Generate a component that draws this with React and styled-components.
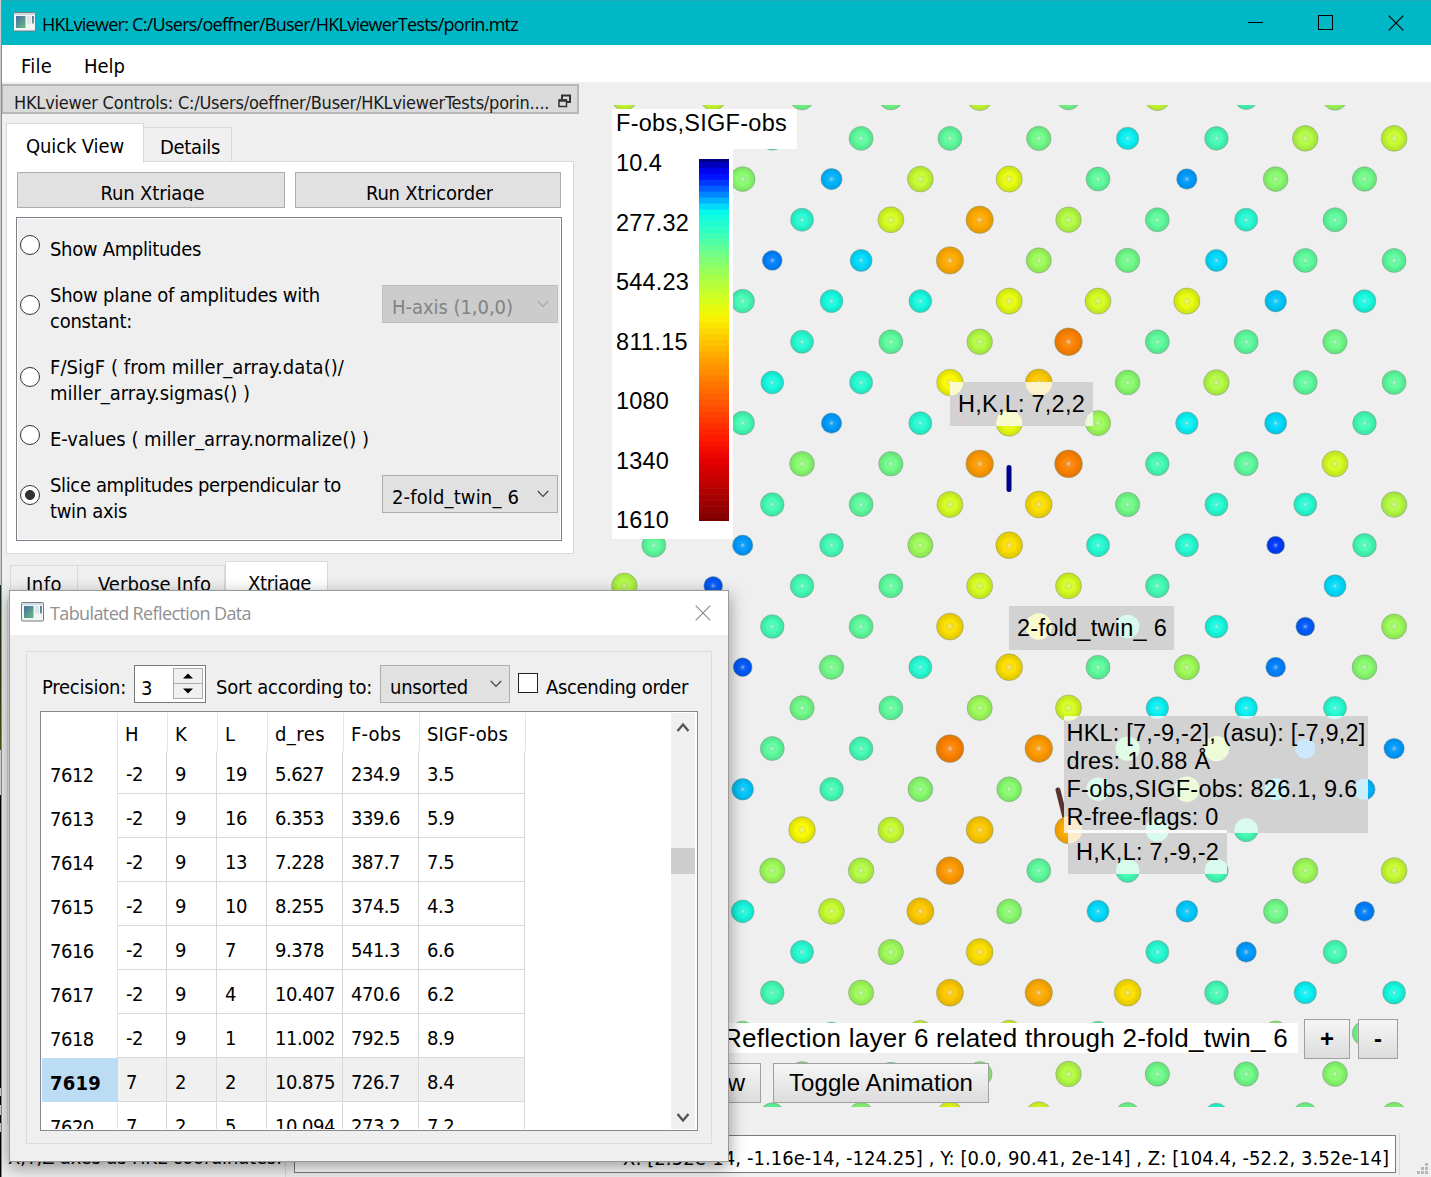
import React, { useLayoutEffect, useRef, useState } from "react";
import styled, { createGlobalStyle, css } from "styled-components";

const QT = `"DejaVu Sans Condensed", "DejaVu Sans", sans-serif`;
const SEGOE = `"Open Sans", "Noto Sans", sans-serif`;
const ARIAL = `"Liberation Sans", Arial, sans-serif`;

const Global = createGlobalStyle`
  * { box-sizing: border-box; }
  body { margin: 0; background: #efefef; overflow: hidden; }
  button { margin: 0; padding: 0; }
`;

/* ---------- text that keeps a fixed advance width ---------- */
const TextSpan = styled.span`
  display: inline-block;
  flex: none;
  white-space: pre;
  font-family: ${(p) => p.$font || QT};
  font-stretch: ${(p) => (p.$font ? "normal" : "condensed")};
  font-size: ${(p) => p.$size || 20}px;
  line-height: ${(p) => p.$lh || 26}px;
  color: ${(p) => p.$color || "#000"};
`;

function Label({ w, children, font, size, lh, color, className }) {
  const ref = useRef(null);
  const [spacing, setSpacing] = useState(0);
  useLayoutEffect(() => {
    if (!w) return;
    const natural = ref.current.getBoundingClientRect().width;
    setSpacing((w - natural) / String(children).length);
  }, [w, children]);
  return (
    <TextSpan ref={ref} className={className} $font={font} $size={size} $lh={lh} $color={color}
      style={{ letterSpacing: spacing + "px" }}>{children}</TextSpan>
  );
}

/* ---------- window frame ---------- */
const Window = styled.div`
  position: relative;
  width: 1431px;
  height: 1177px;
  display: flex;
  overflow: hidden;
  background: #efefef;
`;
const Edge = styled.div`
  flex: none;
  width: 2px;
  border-right: 1px solid #25b5c2;
  background: linear-gradient(#c9c9c9 0 585px, #14281c 585px, #34420f 700px, #4a5412 750px, #d8d8d8 750px 795px, #000 795px 1088px,
    #d0d0d0 1088px 1096px, #000 1096px 1105px, #d0d0d0 1105px 1115px, #000 1115px 1123px, #d0d0d0 1123px 1132px, #000 1132px);
`;
const Shell = styled.div`
  flex: 1;
  display: flex;
  flex-direction: column;
  min-width: 0;
`;
const TitleBar = styled.div`
  height: 45px;
  flex: none;
  display: flex;
  align-items: center;
  background: #00b7c6;
  border-top: 1px solid #1fa9b6;
  padding: 0 27px 0 11px;
  > svg { margin-bottom: 3px; }
`;
const TitleText = styled(Label)`margin: 1px 0 0 6px;`;
const WindowControls = styled.div`
  margin-left: auto;
  display: flex;
  gap: 54px;
`;
const MenuBar = styled.div`
  height: 37px;
  flex: none;
  display: flex;
  gap: 32px;
  padding: 8px 0 0 19px;
  background: #fff;
`;
const Body = styled.div`
  height: 1046px;
  flex: none;
  display: flex;
`;

/* ---------- dock ---------- */
const Dock = styled.div`
  width: 590px;
  flex: none;
  display: flex;
  flex-direction: column;
  padding-top: 2px;
`;
const DockTitle = styled.div`
  width: 577px;
  height: 30px;
  display: flex;
  border: 2px solid #b7b7b7;
  border-left-width: 1px;
  background: #dadada;
  padding: 5px 6px 0 11px;
`;
const FloatIcon = styled.svg`margin: 3px 0 0 auto;`;
const Tabs = styled.div`
  display: flex;
  align-items: flex-end;
  position: relative;
  z-index: 1;
  flex: none;
  height: ${(p) => p.$h}px;
  margin: ${(p) => p.$m};
`;
const Tab = styled.div`
  width: ${(p) => p.$w}px;
  height: ${(p) => (p.$on ? 40 : 35)}px;
  margin-bottom: ${(p) => (p.$on ? -1 : 0)}px;
  padding: ${(p) => p.$pad};
  background: ${(p) => (p.$on ? "#fff" : "#f0f0f0")};
  border: 1px solid #d9d9d9;
  border-bottom: ${(p) => (p.$on ? "none" : "1px solid #d9d9d9")};
  border-left-width: ${(p) => (p.$join ? 0 : 1)}px;
`;
const Panel = styled.div`
  width: 568px;
  height: ${(p) => p.$h}px;
  flex: none;
  margin: -1px 0 0 ${(p) => p.$ml || 4}px;
  border: 1px solid #d9d9d9;
  background: ${(p) => p.$bg || "#fff"};
  padding: 10px 10px 0 9px;
`;
const ButtonRow = styled.div`
  display: flex;
  gap: 10px;
  padding-left: 1px;
`;
const PushButton = styled.button`
  width: ${(p) => p.$w}px;
  height: 36px;
  flex: none;
  overflow: hidden;
  background: #e1e1e1;
  border: 1px solid #adadad;
  display: flex;
  justify-content: center;
  padding: 7px 0 6px;
  span { height: 21px; overflow: hidden; padding-left: 3px; }
`;
const Options = styled.div`
  margin-top: 9px;
  width: 546px;
  height: 324px;
  border: 1px solid #7c8189;
  box-shadow: inset 0 0 0 1px #fff;
  background: #efefef;
  padding: 1px 3px 0;
`;
const OptionRow = styled.div`
  height: ${(p) => p.$h}px;
  display: flex;
  align-items: center;
`;
const Radio = styled.div`
  width: 20px;
  height: 20px;
  flex: none;
  border: 1.3px solid #333;
  border-radius: 50%;
  background: ${(p) => (p.$on ? "radial-gradient(circle, #333 0 4.6px, #fff 5.3px)" : "#fff")};
`;
const OptionText = styled.div`
  display: flex;
  flex-direction: column;
  align-items: flex-start;
  margin-left: 10px;
  padding-top: ${(p) => (p.$one ? 7 : 5)}px;
  width: 332px;
`;
const Combo = styled.div`
  width: ${(p) => p.$w}px;
  height: 38px;
  flex: none;
  display: flex;
  justify-content: space-between;
  padding: 8px 8px 0 9px;
  margin-bottom: ${(p) => p.$mb || 0}px;
  border: 1px solid ${(p) => (p.$off ? "#bfbfbf" : "#adadad")};
  background: ${(p) => (p.$off ? "#ccc" : "#e1e1e1")};
  svg { margin-top: 4px; }
`;

/* ---------- viewer ---------- */
const Viewer = styled.div`
  flex: 1;
  position: relative;
  overflow: hidden;
`;
const Scene = styled.svg`
  position: absolute;
  left: 0;
  top: 23px;
`;
const LegendTitle = styled.div`
  position: absolute;
  left: 20px;
  top: 27px;
  width: 185px;
  height: 40px;
  background: #fff;
  padding: 1px 4px;
`;
const Legend = styled.div`
  position: absolute;
  left: 20px;
  top: 67px;
  width: 121px;
  height: 390px;
  display: flex;
  justify-content: space-between;
  padding: 0 4px;
  background: #fff;
`;
const Ticks = styled.div`
  display: flex;
  flex-direction: column;
  align-items: flex-start;
`;
const TickRow = styled.div`
  height: 59.5px;
  flex: none;
`;
const Ramp = styled.svg`margin-top: 10px;`;
const Tip = styled.div`
  position: absolute;
  display: flex;
  flex-direction: column;
  align-items: flex-start;
  left: ${(p) => p.$x}px;
  top: ${(p) => p.$y}px;
`;
const Caption = styled.div`
  position: absolute;
  right: 133px;
  top: 941px;
  height: 30px;
  display: flex;
  background: #fff;
  padding-right: 10px;
`;
const WebButton = styled.button`
  position: absolute;
  left: ${(p) => p.$x}px;
  top: ${(p) => p.$y}px;
  width: ${(p) => p.$w}px;
  height: 40px;
  border: 1px solid #a0a0a0;
  background: linear-gradient(#f6f6f6, #dcdcdc);
  font: ${(p) => (p.$bold ? "bold " : "")}24px ${ARIAL};
  color: #000;
  display: flex;
  align-items: center;
  justify-content: ${(p) => (p.$end ? "flex-end" : "center")};
  padding-right: ${(p) => (p.$end ? 15 : 0)}px;
`;

/* ---------- status bar ---------- */
const StatusBar = styled.div`
  height: 49px;
  flex: none;
  display: flex;
  padding: 7px 0 0 6px;
`;
const StatusLabel = styled.div`
  width: 278px;
  padding-top: 9px;
  border-right: 1px solid #d8d8d8;
`;
const StatusField = styled.div`
  margin-left: 8px;
  width: 1102px;
  height: 38px;
  border: 1px solid #7a7a7a;
  background: #fff;
  display: flex;
  justify-content: flex-end;
  padding: 9px 6px 0 0;
`;
const StatusRule = styled.div`
  margin: -2px 17px 0 3px;
  width: 1px;
  height: 42px;
  background: #d8d8d8;
`;
const Grip = styled.svg`align-self: flex-end; margin-bottom: 2px;`;

/* ---------- table dialog ---------- */
const Dialog = styled.div`
  position: absolute;
  left: 9px;
  top: 590px;
  width: 720px;
  height: 572px;
  z-index: 3;
  border: 1px solid #9a9a9a;
  background: #efefef;
  box-shadow: 0 5px 16px rgba(0, 0, 0, 0.4);
`;
const DialogTitle = styled.div`
  height: 44px;
  display: flex;
  background: #fff;
  padding: 11px 17px 0 11px;
  svg:last-child { margin: 3px 0 0 auto; }
`;
const DialogText = styled(Label)`margin: -2px 0 0 6px;`;
const Group = styled.div`
  margin: 16px 16px 0;
  height: 493px;
  border: 1px solid #dcdcdc;
  padding: 13px 13px 0;
`;
const Tools = styled.div`
  height: 46px;
  display: flex;
`;
const PrecisionText = styled(Label)`margin: 9px 0 0 2px;`;
const SortText = styled(Label)`margin: 9px 0 0 10px;`;
const AscText = styled(Label)`margin: 9px 0 0 8px;`;
const Spin = styled.div`
  width: 72px;
  height: 38px;
  margin-left: 8px;
  border: 1px solid #7a7a7a;
  background: #fff;
  display: flex;
  justify-content: space-between;
  padding: 2px 2px 0 6px;
`;
const SpinValue = styled(Label)`margin-top: 7px;`;
const SpinButtons = styled.div`
  width: 30px;
  display: flex;
  flex-direction: column;
`;
const SpinButton = styled.div`
  height: 16px;
  margin-bottom: -1px;
  border: 1px solid #acacac;
  background: #f0f0f0;
  display: flex;
  align-items: center;
  justify-content: center;
`;
const SortCombo = styled(Combo)`margin-left: 8px; padding-right: 7px;`;
const CheckBox = styled.div`
  margin: 8px 0 0 8px;
  width: 20px;
  height: 20px;
  border: 1.4px solid #222;
  background: #fff;
`;
const TableFrame = styled.div`
  width: 658px;
  height: 420px;
  border: 1px solid #828790;
  padding: 1px;
  background: #fff;
  display: flex;
  justify-content: space-between;
`;
const Grid = styled.div`
  height: 416px;
  overflow: hidden;
`;
const Row = styled.div`
  display: flex;
  height: ${(p) => (p.$head ? 38 : 44)}px;
  &:nth-child(2) { height: 43px; }
  &:nth-child(2) > div { padding-top: 10px; }
  &:nth-child(2) > div:first-child { padding-top: 11px; }
`;
const Cell = styled.div`
  width: ${(p) => p.$w}px;
  flex: none;
  padding: 11px 0 0 8px;
  font: 20px/26px ${QT};
  font-stretch: condensed;
  letter-spacing: -0.5px;
  white-space: nowrap;
  color: #000;
  border-right: 1px solid #d8d8d8;
  border-bottom: 1px solid #d8d8d8;
  background: ${(p) => (p.$sel ? "#f0f0f0" : "#fff")};
  ${(p) => p.$head && css`
    border-bottom: none;
    border-color: #e5e5e5;
    padding: 8px 0 0 7px;
  `}
`;
const RowHead = styled(Cell)`
  width: 76px;
  padding: 12px 0 0 8px;
  border-bottom: none;
  border-color: ${(p) => (p.$sel ? "#bcdcf4" : "#e5e5e5")};
  background: ${(p) => (p.$sel ? "#bcdcf4" : "#fff")};
  font-weight: ${(p) => (p.$sel ? "bold" : "normal")};
  letter-spacing: ${(p) => (p.$sel ? 0.2 : -0.5)}px;
`;
const Scroll = styled.div`
  width: 24px;
  height: 416px;
  margin-right: 1px;
  background: #f0f0f0;
  display: flex;
  flex-direction: column;
  align-items: center;
  justify-content: space-between;
  padding: 8px 0 6px;
`;
const Thumb = styled.div`
  width: 24px;
  height: 26px;
  background: #cdcdcd;
  margin-bottom: 122px;
`;

/* ---------- icons ---------- */
const AppIcon = ({ size = 23 }) => (
  <svg width={size} height="20" viewBox="0 0 23 20" preserveAspectRatio="none">
    <defs>
      <linearGradient id="scr" x1="0" y1="0" x2="1" y2="1">
        <stop offset="0" stopColor="#4a6aa8" /><stop offset="1" stopColor="#5fc277" />
      </linearGradient>
    </defs>
    <rect x=".5" y=".5" width="22" height="18.5" rx="1" fill="#f2f4f5" stroke="#6f7d84" />
    <rect x="1" y="1" width="21" height="2" fill="#cfdbe2" />
    <rect x="3" y="4" width="9.5" height="12" fill="url(#scr)" />
    <rect x="14" y="4" width="4" height="7.5" fill="#dfe3e6" />
    <rect x="19" y="4" width="2" height="7.5" fill="url(#scr)" />
  </svg>
);
const Cross = ({ color }) => (
  <svg width="16" height="16" viewBox="0 0 16 16"><path d="M.7 .7 15.3 15.3M15.3 .7 .7 15.3" stroke={color} strokeWidth="1.2" /></svg>
);
const Chevron = ({ color = "#444" }) => (
  <svg width="12" height="12" viewBox="0 0 12 12"><path d="M.8 3 6 8.4 11.2 3" fill="none" stroke={color} strokeWidth="1.2" /></svg>
);
const Arrow = ({ up }) => (
  <svg width="14" height="12" viewBox="0 0 14 12">
    <path d={up ? "M1.5 10 7 3.5 12.5 10" : "M1.5 3 7 9.5 12.5 3"} fill="none" stroke="#555" strokeWidth="2.4" />
  </svg>
);
const Tri = ({ up }) => (
  <svg width="10" height="6" viewBox="0 0 10 6"><path d={up ? "M0 5.5 5 .5 10 5.5z" : "M0 .5 5 5.5 10 .5z"} /></svg>
);

/* ---------- reflections ---------- */
const TONES = {
  a: ["#0038f0", 8.8], b: ["#0055ee", 9.3], c: ["#0078f0", 9.8], d: ["#0090f0", 10.1], e: ["#00a8f0", 10.5],
  f: ["#00bcf0", 10.7], g: ["#00cdee", 10.9], h: ["#0ae2e4", 11.1], i: ["#16ead2", 11.3], j: ["#25ecc6", 11.4],
  k: ["#40ecaa", 11.7], l: ["#58ec94", 11.9], m: ["#6aec80", 12.1], n: ["#80ec68", 12.3], o: ["#94ec54", 12.5],
  p: ["#a8ec40", 12.7], q: ["#baec2e", 12.8], r: ["#c8ec20", 12.9], s: ["#d8ec10", 13], t: ["#e8e800", 13.2],
  u: ["#ecd000", 13.3], v: ["#eebc00", 13.4], w: ["#f0a000", 13.6], x: ["#f09000", 13.7], y: ["#ee7a00", 13.8],
};
/* one string per lattice row, right-most column last */
const LATTICE = [
  "qqmmqmqko", "kllmhkpq", "neqsldnm", "jrwpljl", "cgwomgll", "kiisrsfi", "jlpyllm", "ijtvnpll",
  "kdjsohgk", "nmxyklr", "klrumjjp", "ldkoujjak", "pbklrrk.g", "klutkibo", "bmjulocn", "mlorhhj",
  "lkyxmpdd", "fknnkpge", "tqvwkk.", "opxlkkoq", "iqvngfmc", "jou.jdk", "kovwukhi", "mhqrl.nm",
  "nknpmmn", "lnsrmjmn",
];
const ENDS = [1334.5, 1393.6, 1364];
const DOTS = LATTICE.flatMap((row, i) =>
  [...row].map((tone, c) => ({
    tone,
    x: ENDS[i % 3] - 88.83 * (row.length - 1 - c) - 591.5,
    y: 97.7 + 40.68 * i - 105,
  })).filter((d) => d.tone !== ".")
);
const mix = (hex, target, t) => {
  const n = parseInt(hex.slice(1), 16);
  const ch = [n >> 16, (n >> 8) & 255, n & 255].map((v, i) => Math.round(v + (target[i] - v) * t));
  return `rgb(${ch.join(",")})`;
};
const lift = (hex) => {
  const n = parseInt(hex.slice(1), 16);
  return `rgb(${[n >> 16, (n >> 8) & 255, n & 255].map((v) => Math.min(255, Math.round(v * 1.09))).join(",")})`;
};
const WHITE = [255, 255, 255];
const VEILS = [[358, 277, 143, 44], [417, 501, 165, 44], [472, 611, 304, 117], [476, 725, 159, 44]];

function Lattice() {
  return (
    <Scene width="839" height="1002" viewBox="0 0 839 1002">
      <defs>
        {Object.entries(TONES).map(([k, [c]]) => (
          <radialGradient key={k} id={"g" + k}>
            <stop offset="0" stopColor={mix(c, WHITE, 0.6)} />
            <stop offset=".2" stopColor={mix(lift(c) && c, WHITE, 0.16)} />
            <stop offset=".42" stopColor={lift(c)} />
            <stop offset=".75" stopColor={c} />
            <stop offset="1" stopColor={mix(c, [0, 0, 0], 0.05)} />
          </radialGradient>
        ))}
        <clipPath id="veils">
          {VEILS.map(([x, y, w, h]) => <rect key={x + "" + y} x={x} y={y} width={w} height={h} />)}
        </clipPath>
      </defs>
      <path d="M466 685 474 717" stroke="#5a3434" strokeWidth="5" strokeLinecap="round" />
      {DOTS.map((d) => (
        <circle key={d.x + "," + d.y} cx={d.x} cy={d.y} r={TONES[d.tone][1] + 0.1}
          fill={`url(#g${d.tone})`} stroke="#80968a" strokeOpacity=".7" strokeWidth=".7" />
      ))}
      <path d="M417 362.500V384.500" stroke="#00008f" strokeWidth="5" strokeLinecap="round" />
      {VEILS.map(([x, y, w, h]) => <rect key={x + "" + y} x={x} y={y} width={w} height={h} fill="#d2d2d2" />)}
      <g clipPath="url(#veils)">
        <path d="M361 288 370 320" stroke="#dccfcf" strokeWidth="4" />
        {DOTS.map((d) => (
          <circle key={d.x + "," + d.y} cx={d.x} cy={d.y} r={TONES[d.tone][1]} fill={mix(TONES[d.tone][0], WHITE, 0.8)} />
        ))}
      </g>
      <rect x="476" y="725" width="159" height="3" fill="#fafafa" />
    </Scene>
  );
}

const RAMP = [
  [0, 0, 0, 128], [0.025, 0, 0, 225], [0.045, 0, 10, 255], [0.085, 0, 100, 255], [0.125, 0, 205, 255],
  [0.147, 5, 250, 235], [0.2, 48, 255, 195], [0.26, 112, 255, 138], [0.33, 170, 255, 72], [0.39, 212, 255, 28],
  [0.435, 248, 246, 0], [0.5, 255, 200, 0], [0.56, 255, 158, 0], [0.65, 255, 100, 0], [0.77, 255, 26, 0],
  [0.83, 232, 0, 0], [0.9, 190, 0, 0], [1, 125, 0, 0],
];
const rampAt = (t) => {
  const i = Math.max(1, RAMP.findIndex((s) => s[0] >= t));
  const a = RAMP[i - 1], b = RAMP[i], f = (t - a[0]) / (b[0] - a[0]);
  return `rgb(${[1, 2, 3].map((k) => Math.round(a[k] + (b[k] - a[k]) * f)).join(",")})`;
};

const TICKS = [["10.4", 46], ["277.32", 73], ["544.23", 73], ["811.15", 72], ["1080", 53], ["1340", 53], ["1610", 53]];
const COLS = [["H", 50], ["K", 50], ["L", 50], ["d_res", 76], ["F-obs", 76], ["SIGF-obs", 106]];
const HEAD_W = [14, 13, 11, 50, 50, 81];
const ROWS = [
  ["7612", "-2", "9", "19", "5.627", "234.9", "3.5"],
  ["7613", "-2", "9", "16", "6.353", "339.6", "5.9"],
  ["7614", "-2", "9", "13", "7.228", "387.7", "7.5"],
  ["7615", "-2", "9", "10", "8.255", "374.5", "4.3"],
  ["7616", "-2", "9", "7", "9.378", "541.3", "6.6"],
  ["7617", "-2", "9", "4", "10.407", "470.6", "6.2"],
  ["7618", "-2", "9", "1", "11.002", "792.5", "8.9"],
  ["7619", "7", "2", "2", "10.875", "726.7", "8.4"],
  ["7620", "7", "2", "5", "10.094", "273.2", "7.2"],
];
const OPTIONS = [
  { h: 52, lines: [["Show Amplitudes", 151]] },
  { h: 68, lines: [["Show plane of amplitudes with", 270], ["constant:", 82]], combo: ["H-axis (1,0,0)", 121], off: true },
  { h: 76, lines: [["F/SigF ( from miller_array.data()/", 294], ["miller_array.sigmas() )", 200]] },
  { h: 40, lines: [["E-values ( miller_array.normalize() )", 319]] },
  { h: 80, lines: [["Slice amplitudes perpendicular to", 291], ["twin axis", 77]], combo: ["2-fold_twin_ 6", 127], on: true },
];

export default function App() {
  return (
    <Window>
      <Global />
      <Edge />
      <Shell>
        <TitleBar>
          <AppIcon />
          <TitleText w={476} font={SEGOE} size={18}>HKLviewer: C:/Users/oeffner/Buser/HKLviewerTests/porin.mtz</TitleText>
          <WindowControls>
            <svg width="16" height="16"><path d="M0 7.500H15" stroke="#000" /></svg>
            <svg width="16" height="16"><rect x=".5" y=".5" width="14" height="14" fill="none" stroke="#000" /></svg>
            <Cross color="#000" />
          </WindowControls>
        </TitleBar>
        <MenuBar>
          <Label w={31}>File</Label>
          <Label w={41}>Help</Label>
        </MenuBar>
        <Body>
          <Dock>
            <DockTitle>
              <Label w={535} size={18} lh={23} color="#1a1a1a">HKLviewer Controls: C:/Users/oeffner/Buser/HKLviewerTests/porin....</Label>
              <FloatIcon width="13" height="14" viewBox="0 0 13 14">
                <path d="M4 5V1.500H12V8H9" fill="none" stroke="#333" strokeWidth="2" />
                <rect x="1" y="6" width="7.500" height="6.500" fill="none" stroke="#333" strokeWidth="1.500" />
                <path d="M1 6.500H8.500" stroke="#333" strokeWidth="2.500" />
              </FloatIcon>
            </DockTitle>
            <Tabs $h={48} $m="0 0 0 4px">
              <Tab $w={138} $on $pad="9px 0 0 19px"><Label w={98}>Quick View</Label></Tab>
              <Tab $w={88} $join $pad="6px 0 0 16px"><Label w={60}>Details</Label></Tab>
            </Tabs>
            <Panel $h={393}>
              <ButtonRow>
                <PushButton $w={268}><Label w={107}>Run Xtriage</Label></PushButton>
                <PushButton $w={266}><Label w={130}>Run Xtricorder</Label></PushButton>
              </ButtonRow>
              <Options>
                {OPTIONS.map((o) => (
                  <OptionRow key={o.h} $h={o.h}>
                    <Radio $on={o.on} />
                    <OptionText $one={o.lines.length === 1}>
                      {o.lines.map(([t, w]) => <Label key={t} w={w}>{t}</Label>)}
                    </OptionText>
                    {o.combo && (
                      <Combo $w={176} $off={o.off} $mb={2}>
                        <Label w={o.combo[1]} color={o.off ? "#838383" : "#000"}>{o.combo[0]}</Label>
                        <Chevron color={o.off ? "#a8a8a8" : "#444"} />
                      </Combo>
                    )}
                  </OptionRow>
                ))}
              </Options>
            </Panel>
            <Tabs $h={46} $m="0 0 0 8px">
              <Tab $w={68} $pad="5px 0 0 15px"><Label w={36}>Info</Label></Tab>
              <Tab $w={147} $join $pad="5px 0 0 20px"><Label w={113}>Verbose Info</Label></Tab>
              <Tab $w={103} $on $pad="8px 0 0 22px"><Label w={63}>Xtriage</Label></Tab>
            </Tabs>
            <Panel $h={525} $ml={5} $bg="#f3f3f3" />
          </Dock>
          <Viewer>
            <Lattice />
            <LegendTitle><Label w={171} font={ARIAL} size={23.5}>F-obs,SIGF-obs</Label></LegendTitle>
            <Legend>
              <Ticks>
                {TICKS.map(([t, w]) => <TickRow key={t}><Label w={w} font={ARIAL} size={23.5} lh={28}>{t}</Label></TickRow>)}
              </Ticks>
              <Ramp width="30" height="362">
                {Array.from({ length: 62 }, (_, i) => (
                  <rect key={i} y={(i * 362) / 61 - 3} width="30" height="6.500" fill={rampAt(Math.min(1, i / 61))} />
                ))}
              </Ramp>
            </Legend>
            <Tip $x={366} $y={308}><Label w={127} font={ARIAL} size={23.5} lh={28}>H,K,L: 7,2,2</Label></Tip>
            <Tip $x={425} $y={532}><Label w={150} font={ARIAL} size={23.5} lh={28}>2-fold_twin_ 6</Label></Tip>
            <Tip $x={474.5} $y={637}>
              <Label w={299} font={ARIAL} size={23.5} lh={28}>HKL: [7,-9,-2], (asu): [-7,9,2]</Label>
              <Label w={144} font={ARIAL} size={23.5} lh={28}>dres: 10.88 Å</Label>
              <Label w={291} font={ARIAL} size={23.5} lh={28}>F-obs,SIGF-obs: 826.1, 9.6</Label>
              <Label w={152} font={ARIAL} size={23.5} lh={28}>R-free-flags: 0</Label>
            </Tip>
            <Tip $x={484} $y={756}><Label w={143} font={ARIAL} size={23.5} lh={28}>H,K,L: 7,-9,-2</Label></Tip>
            <Caption><Label w={565} font={ARIAL} size={26} lh={30}>Reflection layer 6 related through 2-fold_twin_ 6</Label></Caption>
            <WebButton $x={712} $y={937} $w={46} $bold>+</WebButton>
            <WebButton $x={766} $y={937} $w={40} $bold>-</WebButton>
            <WebButton $x={69} $y={981} $w={100} $end>w</WebButton>
            <WebButton $x={181} $y={981} $w={216}><Label w={184} font={ARIAL} size={24}>Toggle Animation</Label></WebButton>
          </Viewer>
        </Body>
        <StatusBar>
          <StatusLabel><Label w={274}>X,Y,Z axes as HKL coordinates:</Label></StatusLabel>
          <StatusField><Label w={766}>X: [2.52e-14, -1.16e-14, -124.25] , Y: [0.0, 90.41, 2e-14] , Z: [104.4, -52.2, 3.52e-14]</Label></StatusField>
          <StatusRule />
          <Grip width="12" height="12" viewBox="0 0 12 12" fill="#b8b8b8">
            <path d="M8 0h3v3h-3zM4 4h3v3h-3zM8 4h3v3h-3zM0 8h3v3h-3zM4 8h3v3h-3zM8 8h3v3h-3z" />
          </Grip>
        </StatusBar>
      </Shell>
      <Dialog>
        <DialogTitle>
          <AppIcon />
          <DialogText w={201} font={SEGOE} size={18} color="#909090">Tabulated Reflection Data</DialogText>
          <Cross color="#8a8a8a" />
        </DialogTitle>
        <Group>
          <Tools>
            <PrecisionText w={84}>Precision:</PrecisionText>
            <Spin>
              <SpinValue w={12}>3</SpinValue>
              <SpinButtons>
                <SpinButton><Tri up /></SpinButton>
                <SpinButton><Tri /></SpinButton>
              </SpinButtons>
            </Spin>
            <SortText w={156}>Sort according to:</SortText>
            <SortCombo $w={130}><Label w={78}>unsorted</Label><Chevron /></SortCombo>
            <CheckBox />
            <AscText w={142}>Ascending order</AscText>
          </Tools>
          <TableFrame>
            <Grid>
              <Row $head>
                <RowHead />
                {COLS.map(([t, w], i) => <Cell key={t} $w={w} $head><Label w={HEAD_W[i]}>{t}</Label></Cell>)}
              </Row>
              {ROWS.map((r) => (
                <Row key={r[0]}>
                  <RowHead $sel={r[0] === "7619"}>{r[0]}</RowHead>
                  {COLS.map(([t, w], i) => (
                    <Cell key={t} $w={i === 0 ? w - 1 : w} $sel={r[0] === "7619"}>{r[i + 1]}</Cell>
                  ))}
                </Row>
              ))}
            </Grid>
            <Scroll>
              <Arrow up />
              <Thumb />
              <Arrow />
            </Scroll>
          </TableFrame>
        </Group>
      </Dialog>
    </Window>
  );
}
